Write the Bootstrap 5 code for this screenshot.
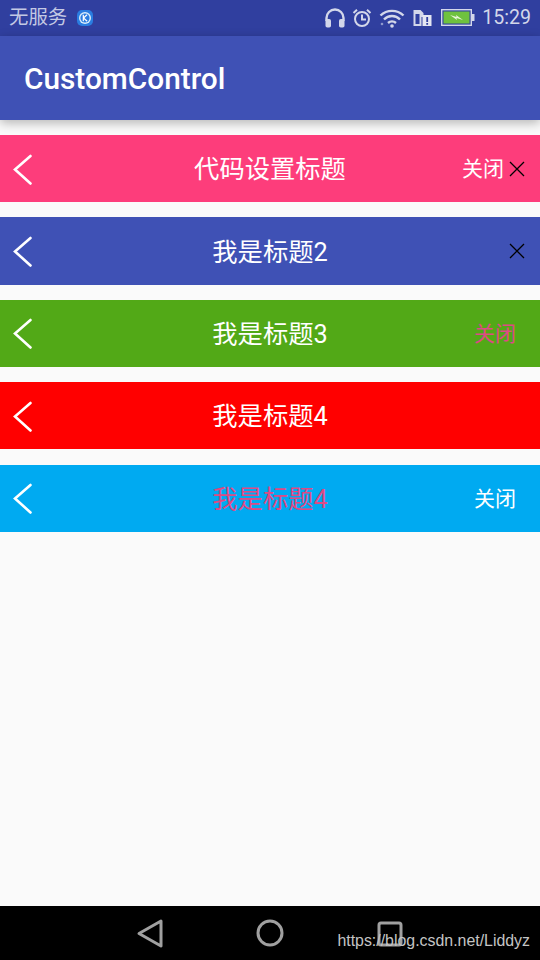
<!DOCTYPE html>
<html lang="zh">
<head>
<meta charset="utf-8">
<title>CustomControl</title>
<link href="https://cdn.jsdelivr.net/npm/bootstrap@5.3.0/dist/css/bootstrap.min.css" rel="stylesheet">
<style>
html,body{margin:0;padding:0;height:960px;width:540px;overflow:hidden;background:#fafafa}
body{font-family:Roboto,"Noto Sans CJK SC",sans-serif}
.phone{width:540px;height:960px;position:relative}
.statusbar{height:36px;background:#303f9f;color:#c3c9e4;padding:0 9px}
.carrier{font-size:19.4px;line-height:36px}
.ktag{margin-left:9px}
.clock{font-size:19.6px;margin-left:7px;color:#d3d7ea}
.sicons{gap:7px}
.appbar{height:84px;background:#3f51b5;color:#fff;padding:2px 0 0 24px;font-size:29.8px;font-weight:500;box-shadow:0 3px 10px rgba(0,0,0,.28);position:relative;z-index:1}
.content{flex:1 1 auto;min-height:0;padding-top:15px;background:#fafafa}
.tbar{height:67.2px;margin-bottom:15.2px;display:grid;grid-template-columns:1fr auto 1fr;align-items:center;color:#fff;font-size:25.3px}
.tb-left{padding-left:13px;display:flex;align-items:center}
.tb-right{display:flex;justify-content:flex-end;align-items:center;font-size:21px;padding-right:15px}
.tlabel{padding-top:3px}
.closeword{margin-right:5px;padding-top:3px}
.closeword.solo{margin-right:9px}
.tpink{background:#fd3d7b}
.tblue{background:#3f51b5}
.tgreen{background:#52a917}
.tred{background:#f00}
.tcyan{background:#00aaf1}
.rosetext{color:#dd4a85}
.navkeys{height:54px;background:#000;position:relative}
.wm{position:absolute;right:10px;top:25px;font-family:"Liberation Sans",sans-serif;font-size:15.9px;line-height:20px;color:#c4c4c4}
</style>
</head>
<body>
<div class="phone d-flex flex-column">
  <div class="statusbar d-flex align-items-center justify-content-between flex-shrink-0">
    <div class="d-flex align-items-center">
      <span class="carrier">无服务</span>
      <svg class="ktag" width="18" height="18" viewBox="0 0 18 18"><rect x="1" y="1" width="16" height="16" rx="5" fill="#2a7de1"/><circle cx="9" cy="9" r="6" fill="#d8ecfb"/><circle cx="9" cy="9" r="4.6" fill="#2a7de1"/><path d="M7.3 5.8v6.4M11 5.8 7.5 9l3.7 3.2" stroke="#fff" stroke-width="1.2" fill="none"/></svg>
    </div>
    <div class="d-flex align-items-center">
      <div class="d-flex align-items-center sicons">
        <svg width="20" height="20" viewBox="0 0 20 20" fill="none"><path d="M1.500 13V10a8.500 8.500 0 0 1 17 0V13" stroke="#d3d7ea" stroke-width="2.400"/><rect x="0.500" y="11" width="5.500" height="8.500" rx="1.800" fill="#d3d7ea"/><rect x="14" y="11" width="5.500" height="8.500" rx="1.800" fill="#d3d7ea"/></svg>
        <svg width="20" height="20" viewBox="0 0 20 20" fill="none" stroke="#d3d7ea" stroke-width="2"><circle cx="10" cy="11" r="7"/><path d="M10 6.500V11.500H14M1.500 5 5 1.800M18.500 5 15 1.800"/></svg>
        <svg width="26" height="20" viewBox="0 0 26 20" fill="none" stroke="#d3d7ea" stroke-width="2.400"><path d="M1.500 7.500a16.500 16.500 0 0 1 23 0M5 11.500a11 11 0 0 1 16 0M9 15a6 6 0 0 1 8 0"/><circle cx="13" cy="18" r="1.800" fill="#d3d7ea" stroke="none"/><circle cx="3" cy="16" r="1.300" fill="#8f99cc" stroke="none"/></svg>
        <svg width="21" height="20" viewBox="0 0 20 20"><path d="M1 2h7l3 3v4h-2v9H1z" fill="#d3d7ea"/><rect x="3" y="6" width="4" height="10" fill="#303f9f"/><rect x="10" y="7" width="9" height="11" fill="#e4e6f2"/><rect x="13.800" y="9" width="1.800" height="5" fill="#303f9f"/><rect x="13.800" y="15" width="1.800" height="1.800" fill="#303f9f"/></svg>
      </div>
      <svg class="ms-2" width="34" height="17" viewBox="0 0 34 17"><rect x="0.700" y="0.700" width="29.600" height="15.600" fill="none" stroke="#d3d7ea" stroke-width="1.400"/><rect x="2.500" y="2.500" width="26" height="12" fill="#6fc23e"/><rect x="31" y="5" width="2.500" height="7" fill="#d3d7ea"/><path d="M9 6 15.500 8 15 6l7 5-6.500-2 .5 2z" fill="#e8f5d8"/></svg>
      <span class="clock">15:29</span>
    </div>
  </div>
  <div class="appbar d-flex align-items-center flex-shrink-0">CustomControl</div>
  <div class="content">
    <div class="tbar tpink">
      <div class="tb-left"><svg width="20" height="32" viewBox="0 0 20 32" fill="none" stroke="#fff" stroke-width="2.600" stroke-linecap="round"><path d="M17.500 3 2 16.500l15.500 14"/></svg></div>
      <div class="tlabel">代码设置标题</div>
      <div class="tb-right"><span class="closeword">关闭</span><svg width="16" height="16" viewBox="0 0 16 16" stroke="#000" stroke-width="1.300"><path d="M1 1 15 15M15 1 1 15"/></svg></div>
    </div>
    <div class="tbar tblue">
      <div class="tb-left"><svg width="20" height="32" viewBox="0 0 20 32" fill="none" stroke="#fff" stroke-width="2.600" stroke-linecap="round"><path d="M17.500 3 2 16.500l15.500 14"/></svg></div>
      <div class="tlabel">我是标题2</div>
      <div class="tb-right"><svg width="16" height="16" viewBox="0 0 16 16" stroke="#000" stroke-width="1.300"><path d="M1 1 15 15M15 1 1 15"/></svg></div>
    </div>
    <div class="tbar tgreen">
      <div class="tb-left"><svg width="20" height="32" viewBox="0 0 20 32" fill="none" stroke="#fff" stroke-width="2.600" stroke-linecap="round"><path d="M17.500 3 2 16.500l15.500 14"/></svg></div>
      <div class="tlabel">我是标题3</div>
      <div class="tb-right"><span class="closeword solo rosetext">关闭</span></div>
    </div>
    <div class="tbar tred">
      <div class="tb-left"><svg width="20" height="32" viewBox="0 0 20 32" fill="none" stroke="#fff" stroke-width="2.600" stroke-linecap="round"><path d="M17.500 3 2 16.500l15.500 14"/></svg></div>
      <div class="tlabel">我是标题4</div>
      <div class="tb-right"></div>
    </div>
    <div class="tbar tcyan">
      <div class="tb-left"><svg width="20" height="32" viewBox="0 0 20 32" fill="none" stroke="#fff" stroke-width="2.600" stroke-linecap="round"><path d="M17.500 3 2 16.500l15.500 14"/></svg></div>
      <div class="tlabel rosetext">我是标题4</div>
      <div class="tb-right"><span class="closeword solo">关闭</span></div>
    </div>
  </div>
  <div class="navkeys flex-shrink-0 d-flex align-items-center justify-content-center">
    <svg width="300" height="54" viewBox="0 0 300 54" fill="none" stroke="#a0a0a0" stroke-width="3"><path d="M41 15 19 27.500 41 40z" stroke-linejoin="round"/><circle cx="150" cy="27" r="12"/><rect x="259" y="17" width="22" height="22" rx="2"/></svg>
    <span class="wm">https://blog.csdn.net/Liddyz</span>
  </div>
</div>
<script src="https://cdn.jsdelivr.net/npm/bootstrap@5.3.0/dist/js/bootstrap.bundle.min.js"></script>
</body>
</html>
